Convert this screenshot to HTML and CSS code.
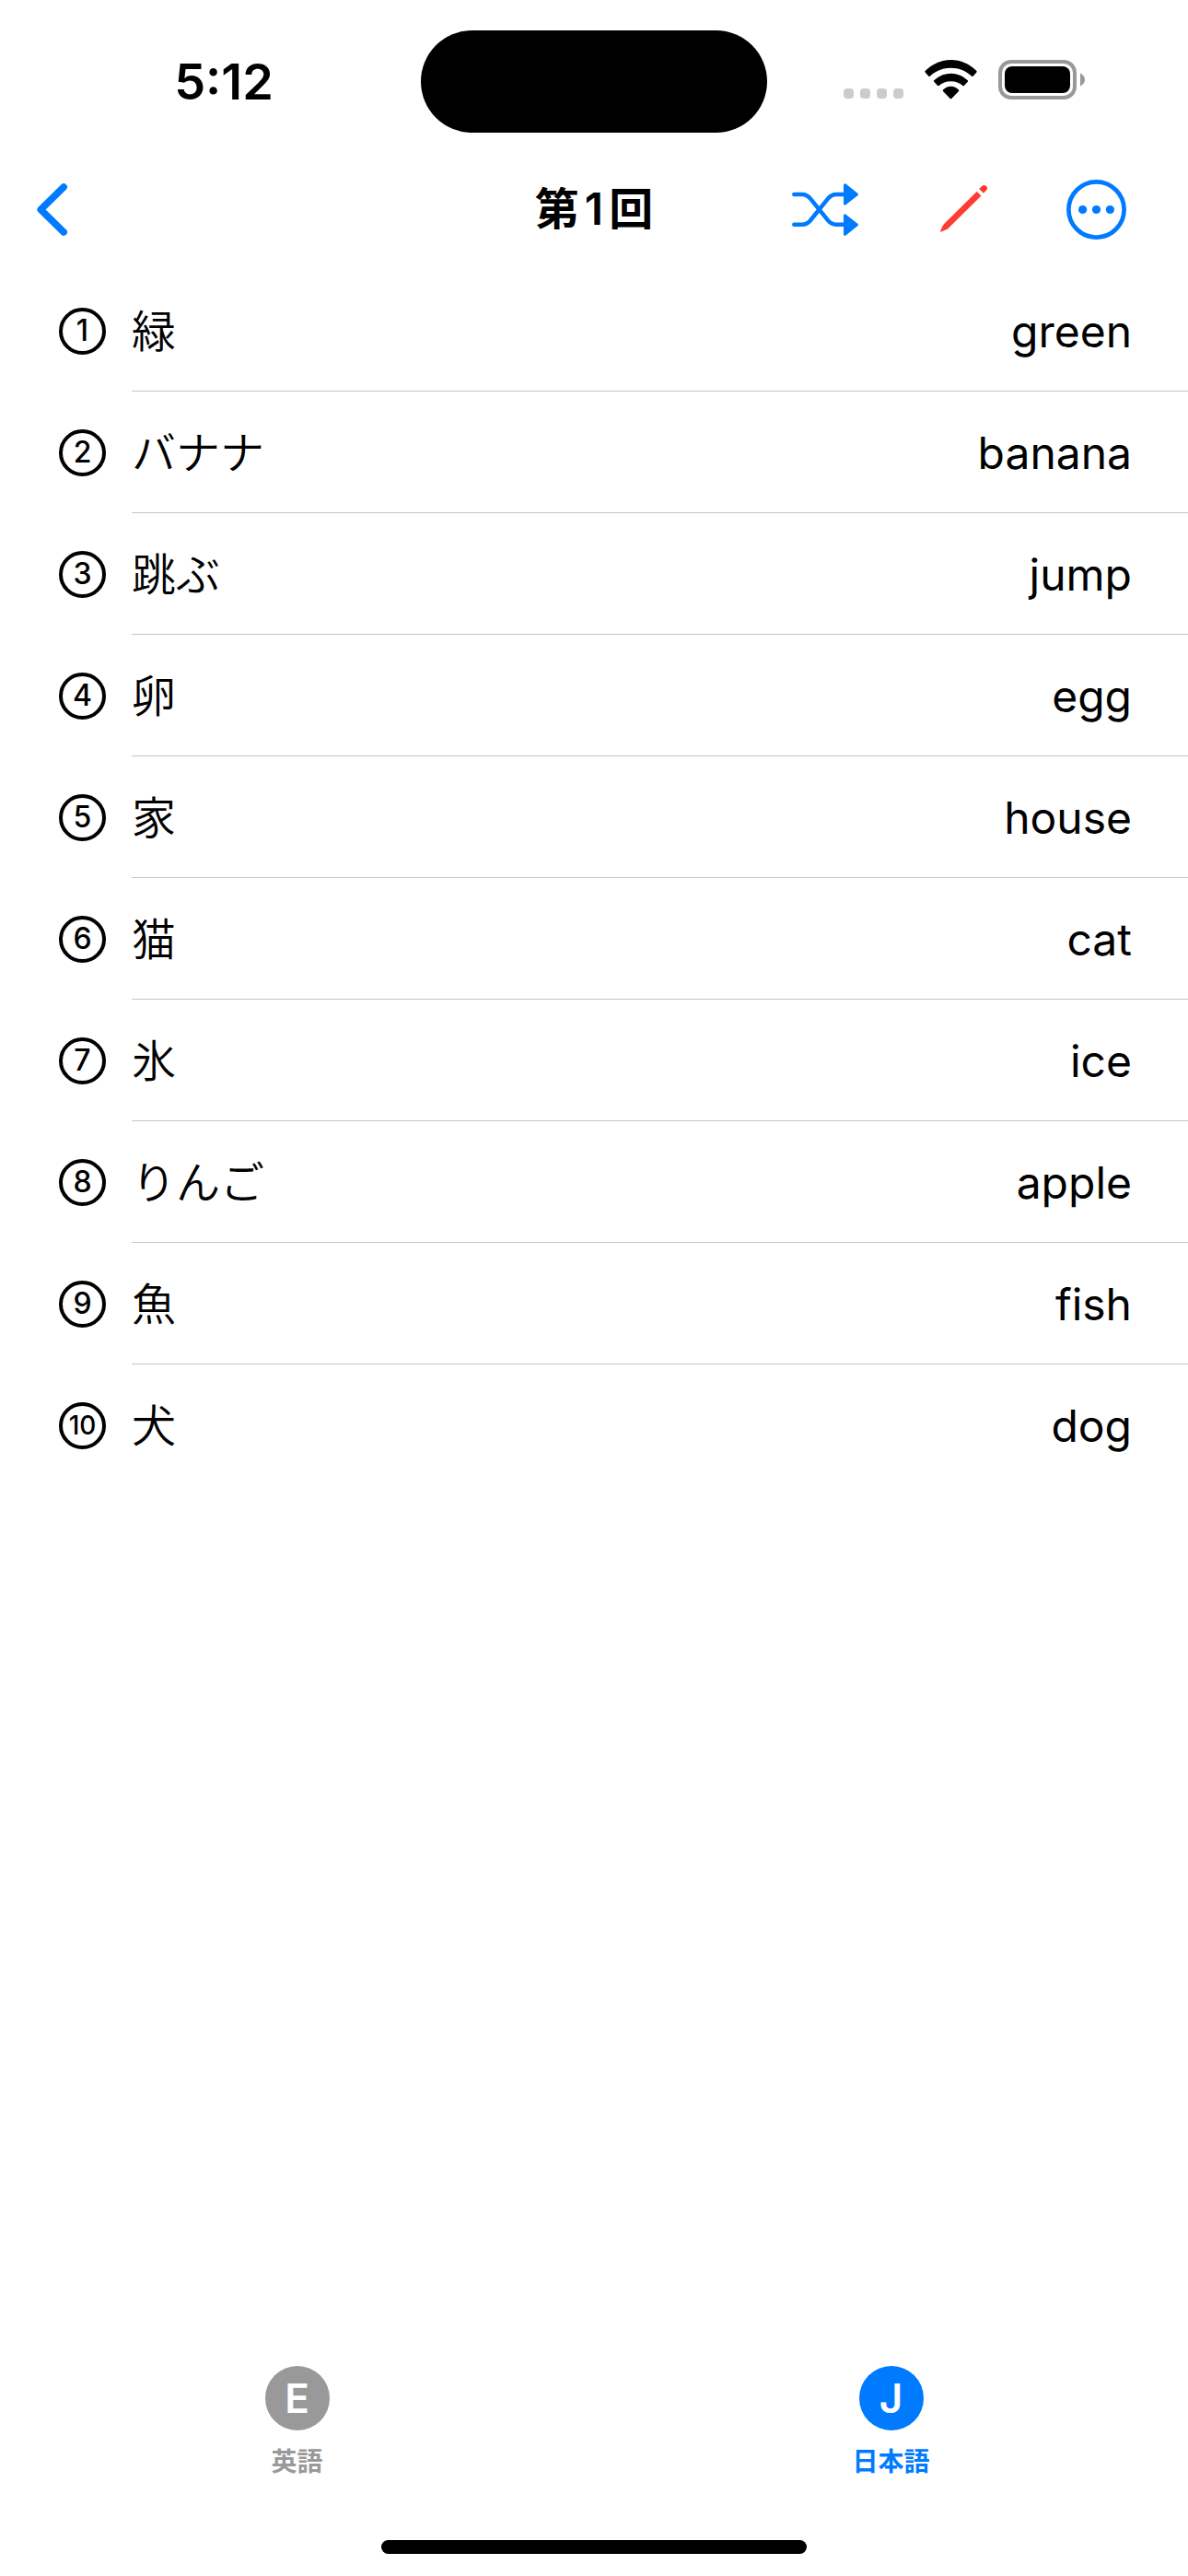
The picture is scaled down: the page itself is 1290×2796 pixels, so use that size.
FILE: index.html
```html
<!DOCTYPE html>
<html lang="ja">
<head>
<meta charset="utf-8">
<meta name="viewport" content="width=device-width, initial-scale=1">
<title>第1回</title>
<link rel="stylesheet" href="styles.css">
</head>
<body>
<div class="screen">
  <div class="status">
    <div class="status-side status-left"><time>5:12</time></div>
    <div class="island"></div>
    <div class="status-side status-right">
      <svg width="65" height="43" viewBox="0 0 65 43" fill="#ccc" aria-hidden="true">
        <rect x="0" y="31" width="11" height="11" rx="4"/>
        <rect x="18" y="31" width="11" height="11" rx="4"/>
        <rect x="36" y="31" width="11" height="11" rx="4"/>
        <rect x="54" y="31" width="11" height="11" rx="4"/>
      </svg>
      <svg width="57" height="43" viewBox="0 0 57 43" aria-hidden="true">
        <path d="M.6 13.4Q0 12.7.6 12C8.2 4.4 17.8 0 28.5 0S48.800 4.400 56.400 12Q57 12.700 56.400 13.400L52.600 17.700Q51.900 18.400 51.200 17.700C45 11.900 37.100 8.700 28.500 8.700S12 11.900 5.800 17.700Q5.100 18.400 4.400 17.700Z"/>
        <path d="M10.200 23.700Q9.600 23 10.200 22.300C15.100 17.500 21.500 14.700 28.500 14.700S41.900 17.500 46.800 22.300Q47.400 23 46.800 23.700L42.900 27.900Q42.200 28.600 41.500 27.900C38 25 33.500 23.300 28.500 23.300S19 25 15.500 27.900Q14.800 28.600 14.100 27.900Z"/>
        <path d="M20 34Q19.400 33.300 20 32.600C22.200 30.200 25.200 28.700 28.500 28.700S34.800 30.200 37 32.600Q37.600 33.300 37 34L29.300 41.900Q28.500 42.700 27.700 41.900Z"/>
      </svg>
      <svg width="94" height="43" viewBox="0 0 94 43" aria-hidden="true">
        <rect x="2" y="2" width="81" height="39" rx="12" fill="none" stroke="#999" stroke-width="4"/>
        <rect x="7" y="7" width="71" height="29" rx="8"/>
        <path d="M89 14.500C92 16 94 18.500 94 21.500S92 27 89 28.500Z" fill="#999"/>
      </svg>
    </div>
  </div>

  <header class="nav">
    <div class="nav-left">
      <button class="icon-button" type="button" aria-label="戻る">
        <svg width="33" height="57" viewBox="0 0 33 57" fill="none" stroke="currentColor" stroke-width="7.500" stroke-linecap="round" stroke-linejoin="round"><path d="M29.200 4L4.200 28.500 29.200 53"/></svg>
      </button>
    </div>
    <h1 class="title">第<span class="title-digit">1</span>回</h1>
    <div class="nav-right">
      <button class="icon-button" type="button" aria-label="シャッフル">
        <svg width="72" height="57" viewBox="0 0 72 57" aria-hidden="true">
          <g fill="none" stroke="currentColor" stroke-width="4.500" stroke-linecap="round">
            <path d="M2.300 12H11C15.500 12 17.800 14 20 16.700L39 40.200C41.500 43.300 43.500 44.800 48 44.800H58"/>
            <path d="M2.300 44.800H11C15.500 44.800 17.800 42.800 20 40.200L39 16.700C41.500 13.500 43.500 12 48 12H58"/>
          </g>
          <g fill="currentColor" stroke="currentColor" stroke-width="3" stroke-linejoin="round">
            <path d="M57.500 1.700L70.300 12 57.500 22.100Z"/>
            <path d="M57.500 34.800L70.300 45 57.500 55.300Z"/>
          </g>
        </svg>
      </button>
      <button class="icon-button danger" type="button" aria-label="編集">
        <svg width="54" height="54" viewBox="0 0 54 54" fill="currentColor" aria-hidden="true">
          <path d="M3.200 50.400L6 44.400 7.400 42.800 42.300 8.200Q42.700 7.800 43.100 8.200L47 12.100Q47.400 12.500 47 12.900L12 47.600 10.500 48.700 4.200 51.600Q2.600 52 3.200 50.400Z"/>
          <path d="M45.600 5.500Q45 5 45.600 4.500L48.200 2Q50.200.200 52.300 1.600 55 3.500 53.600 6L50.500 9.200Q50 9.700 49.500 9.200Z"/>
        </svg>
      </button>
      <button class="icon-button" type="button" aria-label="その他">
        <svg width="65" height="65" viewBox="0 0 65 65" fill="currentColor" aria-hidden="true">
          <circle cx="32.500" cy="32.500" r="30.100" fill="none" stroke="currentColor" stroke-width="4.700"/>
          <circle cx="17.600" cy="32.500" r="4.600"/><circle cx="32.500" cy="32.500" r="4.600"/><circle cx="47.400" cy="32.500" r="4.600"/>
        </svg>
      </button>
    </div>
  </header>

  <main class="content">
    <ol class="words">
      <li class="word"><span class="badge">1</span><div class="pair"><span class="ja">緑</span><span class="en" lang="en">green</span></div></li>
      <li class="word"><span class="badge">2</span><div class="pair"><span class="ja">バナナ</span><span class="en" lang="en">banana</span></div></li>
      <li class="word"><span class="badge">3</span><div class="pair"><span class="ja">跳ぶ</span><span class="en" lang="en">jump</span></div></li>
      <li class="word"><span class="badge">4</span><div class="pair"><span class="ja">卵</span><span class="en" lang="en">egg</span></div></li>
      <li class="word"><span class="badge">5</span><div class="pair"><span class="ja">家</span><span class="en" lang="en">house</span></div></li>
      <li class="word"><span class="badge">6</span><div class="pair"><span class="ja">猫</span><span class="en" lang="en">cat</span></div></li>
      <li class="word"><span class="badge">7</span><div class="pair"><span class="ja">氷</span><span class="en" lang="en">ice</span></div></li>
      <li class="word"><span class="badge">8</span><div class="pair"><span class="ja">りんご</span><span class="en" lang="en">apple</span></div></li>
      <li class="word"><span class="badge">9</span><div class="pair"><span class="ja">魚</span><span class="en" lang="en">fish</span></div></li>
      <li class="word"><span class="badge badge-wide">10</span><div class="pair"><span class="ja">犬</span><span class="en" lang="en">dog</span></div></li>
    </ol>
  </main>

  <nav class="tabs">
    <a class="tab" href="#english"><span class="tab-icon">E</span><span class="tab-label">英語</span></a>
    <a class="tab tab-active" href="#japanese" aria-current="page"><span class="tab-icon">J</span><span class="tab-label">日本語</span></a>
  </nav>
  <div class="home-indicator"></div>
</div>
</body>
</html>
```
FILE: styles.css
```css
:root {
  --blue: #007aff;
  --red: #ff3b30;
  --gray: #999;
  --line: #c6c6c8;
}

* {
  box-sizing: border-box;
}

body {
  margin: 0;
  background: #fff;
  color: #000;
  font-family: Inter, "Noto Sans CJK JP", sans-serif;
}

svg {
  display: block;
}

.screen {
  display: flex;
  flex-direction: column;
  min-height: 100vh;
}

/* Status bar */
.status {
  display: grid;
  grid-template-columns: 1fr 376px 1fr;
  padding-top: 33px;
}

.island {
  height: 111px;
  border-radius: 56px;
  background: #000;
}

.status-side {
  display: flex;
  align-items: center;
  justify-content: center;
}

.status-left {
  padding-left: 29px;
  font-size: 54px;
  font-weight: 600;
}

.status-right {
  gap: 23px;
  padding: 0 29px 4px 0;
}

/* Navigation bar */
.nav {
  display: grid;
  grid-template-columns: 1fr auto 1fr;
  align-items: center;
  height: 149px;
  padding-top: 17px;
}

.nav-left,
.nav-right {
  display: flex;
  align-items: center;
}

.nav-left {
  padding-left: 40px;
}

.nav-right {
  justify-content: flex-end;
  gap: 86px;
  padding-right: 67px;
}

.icon-button {
  padding: 0;
  border: 0;
  background: none;
  color: var(--blue);
}

.danger {
  color: var(--red);
}

.title {
  margin: 0;
  font-size: 48px;
  font-weight: 700;
  line-height: 64px;
}

.title-digit {
  margin: 0 6px;
  font-weight: 600;
}

/* Word list */
.content {
  flex: 1;
}

.words {
  margin: 0;
  padding: 0;
  list-style: none;
}

.word {
  display: flex;
  align-items: center;
  gap: 28px;
  height: 132px;
  padding-left: 64px;
}

.badge {
  display: flex;
  align-items: center;
  justify-content: center;
  width: 51px;
  height: 51px;
  border: 4px solid #000;
  border-radius: 50%;
  font-size: 32px;
  font-weight: 500;
  line-height: 32px;
}

.badge-wide {
  font-size: 28px;
}

.pair {
  display: flex;
  flex: 1;
  align-items: center;
  justify-content: space-between;
  align-self: stretch;
  padding: 3px 61px 0 0;
  border-bottom: 1px solid var(--line);
}

.word:last-child .pair {
  border-bottom-color: transparent;
}

.ja {
  font-size: 48px;
  font-weight: 350;
  line-height: 64px;
}

.en {
  font-size: 48px;
  line-height: 64px;
}

/* Tab bar */
.tabs {
  display: grid;
  grid-template-columns: 1fr 1fr;
}

.tab {
  display: flex;
  flex-direction: column;
  align-items: center;
  gap: 14px;
  color: var(--gray);
  text-decoration: none;
}

.tab-active {
  color: var(--blue);
}

.tab-icon {
  display: flex;
  align-items: center;
  justify-content: center;
  width: 70px;
  height: 70px;
  border-radius: 50%;
  background: var(--gray);
  color: #fff;
  font-size: 44px;
  font-weight: 600;
  line-height: 44px;
}

.tab-active .tab-icon {
  background: var(--blue);
}

.tab-label {
  font-size: 28px;
  font-weight: 700;
  line-height: 40px;
}

.home-indicator {
  align-self: center;
  width: 462px;
  height: 15px;
  margin: 65px 0 24px;
  border-radius: 8px;
  background: #000;
}
```
